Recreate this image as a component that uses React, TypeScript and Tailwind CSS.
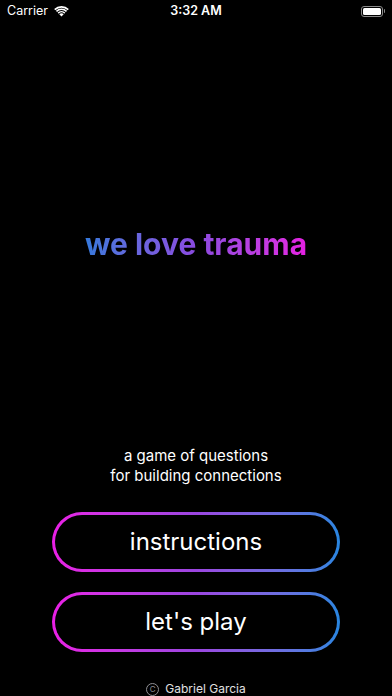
function StatusBar() {
  return (
    <div className="relative flex items-center justify-between h-[20px] px-[7px] text-white text-[12.5px]">
      <div className="flex items-center gap-[6px]">
        <span>Carrier</span>
        <svg width="15" height="11" viewBox="0 0 16 12" fill="white">
          <path d="M8 11.5 L5.6 9 A3.4 3.4 0 0 1 10.4 9 Z" />
          <path d="M3.8 7.2 A6 6 0 0 1 12.2 7.2 L11 8.4 A4.3 4.3 0 0 0 5 8.4 Z" />
          <path d="M1.9 5.3 A8.7 8.7 0 0 1 14.1 5.3 L12.9 6.5 A7 7 0 0 0 3.1 6.5 Z" />
          <path d="M0 3.4 A11.3 11.3 0 0 1 16 3.4 L14.8 4.6 A9.6 9.6 0 0 0 1.2 4.6 Z" />
        </svg>
      </div>
      <span className="absolute left-1/2 -translate-x-1/2 font-semibold">3:32 AM</span>
      <div className="flex items-center">
        <div className="w-[22px] h-[11px] rounded-[3px] border border-[#8a8a8a] p-[1px]">
          <div className="w-full h-full rounded-[1.5px] bg-white" />
        </div>
        <div className="w-[1.5px] h-[4px] ml-[1px] rounded-r-sm bg-[#8a8a8a]" />
      </div>
    </div>
  );
}

function GradientButton({ label }: { label: string }) {
  return (
    <div className="w-[288px] h-[60px] rounded-full p-[3px] bg-gradient-to-r from-[#ea1ee6] via-[#9b45e0] to-[#2585e0]">
      <div className="w-full h-full rounded-full bg-black flex items-center justify-center">
        <span className="text-white text-[24px] leading-none">{label}</span>
      </div>
    </div>
  );
}

export default function App() {
  return (
    <div
      className="w-[392px] h-[696px] bg-black flex flex-col overflow-hidden"
      style={{ fontFamily: 'Inter, "Noto Sans", sans-serif' }}
    >
      <div className="pt-[1px]">
        <StatusBar />
      </div>

      <div className="flex justify-center mt-[208px]">
        <h1 className="text-[30px] font-bold leading-none pb-[4px] bg-gradient-to-r from-[#3479dc] via-[#8a4ae0] to-[#e51ee2] bg-clip-text text-transparent">
          we love trauma
        </h1>
      </div>

      <div className="flex flex-col items-center mt-[183px] text-white text-[15px] leading-[20px]">
        <span>a game of questions</span>
        <span>for building connections</span>
      </div>

      <div className="flex flex-col items-center gap-[20px] mt-[26px]">
        <GradientButton label="instructions" />
        <GradientButton label="let's play" />
      </div>

      <div className="flex items-center justify-center gap-[6px] mt-[28px] text-[12px] text-[#e0e0e0]">
        <span className="w-[13px] h-[13px] rounded-full border border-[#8e8e93] flex items-center justify-center text-[8px] text-[#8e8e93] leading-none">
          C
        </span>
        <span>Gabriel Garcia</span>
      </div>
    </div>
  );
}
